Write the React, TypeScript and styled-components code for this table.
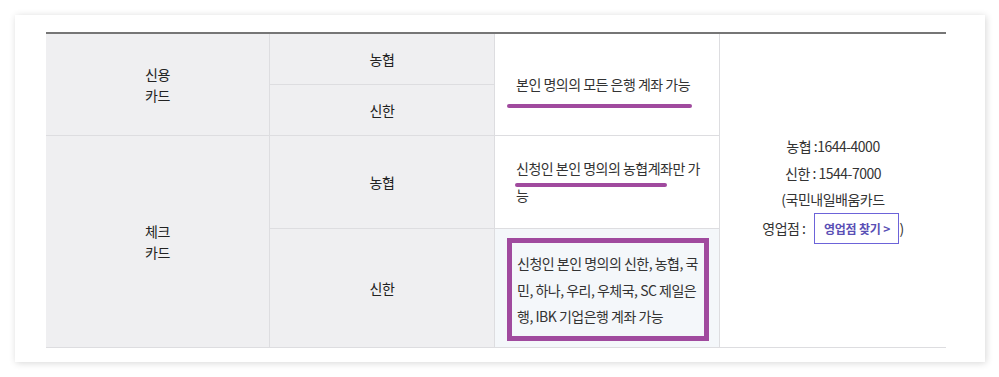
import React from 'react';
import styled, { createGlobalStyle } from 'styled-components';

const GlobalStyle = createGlobalStyle`
    html, body {
        margin: 0;
        padding: 0;
        background: #ffffff;
    }
    body {
        font-family: "Noto Sans CJK KR", "Noto Sans", sans-serif;
        color: #333;
    }
`;

const theme = {
    purple: '#a04a9e',
    border: '#dddde0',
    headBg: '#efeff1',
    noteBg: '#f4f7fa',
    button: '#6c63d9',
    buttonText: '#5a4fb5'
};

const Page = styled.div`
    padding: 15px 14px 15px 15px;
`;

const Card = styled.div`
    width: 970px;
    height: 347px;
    box-sizing: border-box;
    padding: 17px 39px 0 31px;
    background: #fff;
    box-shadow: 1px 1px 7px rgba(0, 0, 0, 0.16);
`;

const Table = styled.div`
    display: grid;
    grid-template-columns: 224px 225px 225px 226px;
    grid-template-rows: 51px 51px 93px 118px;
    border-top: 2px solid #767676;
    border-bottom: 1px solid ${theme.border};
`;

const Cell = styled.div<{ $head?: boolean; $note?: boolean; $last?: boolean; $bottom?: boolean }>`
    display: flex;
    align-items: center;
    justify-content: center;
    text-align: center;
    font-size: 14px;
    letter-spacing: -0.5px;
    line-height: 21px;
    color: #222;
    word-break: break-all;
    line-break: anywhere;
    background: ${p => (p.$head ? theme.headBg : p.$note ? theme.noteBg : '#fff')};
    border-right: ${p => (p.$last ? 'none' : `1px solid ${theme.border}`)};
    border-bottom: ${p => (p.$bottom ? 'none' : `1px solid ${theme.border}`)};
`;

const TextCell = styled(Cell)`
    justify-content: flex-start;
    text-align: left;
    padding: 0 12px 0 21px;
    line-height: 27px;
    color: #333;
`;

const BoxCell = styled(Cell)`
    align-items: stretch;
    padding: 9px 10px 6px 12px;
`;

const NoteBox = styled.div`
    flex: 1;
    border: 5px solid ${theme.purple};
    padding: 7px 2px 0 5px;
    text-align: left;
    line-height: 26.5px;
    color: #333;
`;

const Mark = styled.span<{ $offset: number; $left: number; $right: number }>`
    position: relative;
    &::after {
        content: '';
        position: absolute;
        left: ${p => p.$left}px;
        right: ${p => p.$right}px;
        bottom: ${p => p.$offset}px;
        height: 4px;
        border-radius: 2px;
        background: ${theme.purple};
    }
`;

const Contact = styled.div`
    display: flex;
    flex-direction: column;
    align-items: center;
    line-height: 26.5px;
    color: #333;
    margin-top: -4px;
    word-break: keep-all;
    line-break: auto;
    white-space: nowrap;
`;

const BranchRow = styled.div`
    display: flex;
    align-items: center;
    margin-top: 0;
`;

const FindButton = styled.button`
    margin-left: 9px;
    width: 85px;
    height: 31px;
    box-sizing: border-box;
    border: 1px solid ${theme.button};
    background: #fff;
    color: ${theme.buttonText};
    font-family: inherit;
    font-size: 12px;
    font-weight: 700;
    letter-spacing: -0.2px;
    padding: 0;
    cursor: pointer;
`;

export default function App() {
    return (
        <Page>
            <GlobalStyle />
            <Card>
                <Table>
                    <Cell $head style={{ gridRow: '1 / 3' }}>신용<br />카드</Cell>
                    <Cell $head>농협</Cell>
                    <TextCell style={{ gridRow: '1 / 3', gridColumn: 3 }}>
                        <Mark $offset={-10} $left={-9} $right={-2}>본인 명의의 모든 은행 계좌 가능</Mark>
                    </TextCell>
                    <Cell $last $bottom style={{ gridRow: '1 / 5', gridColumn: 4 }}>
                        <Contact>
                            <span>농협 :1644-4000</span>
                            <span>신한 : 1544-7000</span>
                            <span>(국민내일배움카드</span>
                            <BranchRow>
                                영업점 :<FindButton>영업점 찾기 &gt;</FindButton>)
                            </BranchRow>
                        </Contact>
                    </Cell>
                    <Cell $head style={{ gridRow: 2, gridColumn: 2 }}>신한</Cell>

                    <Cell $head $bottom style={{ gridRow: '3 / 5', gridColumn: 1 }}>체크<br />카드</Cell>
                    <Cell $head style={{ gridRow: 3, gridColumn: 2 }}>농협</Cell>
                    <TextCell style={{ gridRow: 3, gridColumn: 3 }}>
                        <div>
                            <Mark $offset={-9} $left={-1} $right={5}>신청인 본인 명의의 농협계좌</Mark>만 가능
                        </div>
                    </TextCell>
                    <Cell $head $bottom style={{ gridRow: 4, gridColumn: 2 }}>신한</Cell>
                    <BoxCell $note $bottom style={{ gridRow: 4, gridColumn: 3 }}>
                        <NoteBox>신청인 본인 명의의 신한, 농협, 국민, 하나, 우리, 우체국, SC 제일은행, IBK 기업은행 계좌 가능</NoteBox>
                    </BoxCell>
                </Table>
            </Card>
        </Page>
    );
}
